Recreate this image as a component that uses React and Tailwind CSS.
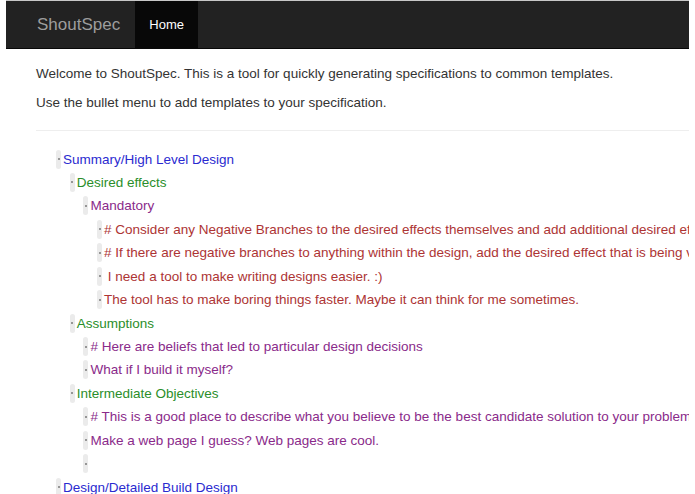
import React from "react";

const rows = [
  [0, "Summary/High Level Design"],
  [1, "Desired effects"],
  [2, "Mandatory"],
  [3, "# Consider any Negative Branches to the desired effects themselves and add additional desired effects to counter them."],
  [3, "# If there are negative branches to anything within the design, add the desired effect that is being violated."],
  [3, "\u00a0I need a tool to make writing designs easier. :)"],
  [3, "The tool has to make boring things faster. Maybe it can think for me sometimes."],
  [1, "Assumptions"],
  [2, "# Here are beliefs that led to particular design decisions"],
  [2, "What if I build it myself?"],
  [1, "Intermediate Objectives"],
  [2, "# This is a good place to describe what you believe to be the best candidate solution to your problem."],
  [2, "Make a web page I guess? Web pages are cool."],
  [2, ""],
  [0, "Design/Detailed Build Design"],
];

const indent = ["ml-0", "ml-[13.7px]", "ml-[27.4px]", "ml-[41.1px]"];
const colors = ["text-[#2a2ad0]", "text-[#2a8e2a]", "text-[#8a2a8a]", "text-[#ad3434]"];

function Bullet() {
  return (
    <span className="flex h-[19px] w-[5px] shrink-0 items-center justify-center rounded-[3px] bg-[#ebebeb]">
      <span className="h-[2px] w-[2px] rounded-full bg-[#7a7a7a]" />
    </span>
  );
}

export default function App() {
  return (
    <div className="w-[695px] h-[494px] overflow-hidden bg-white font-['Liberation_Sans',Arial,sans-serif]">
      <div className="ml-[6px] w-[683px] overflow-hidden">
        <nav className="flex h-[49px] border-t border-t-[#c8c8c8] border-b border-b-[#080808] bg-[#222222]">
          <div className="flex items-center pl-[31px] pr-[15px] text-[17px] text-[#9d9d9d]">ShoutSpec</div>
          <div className="flex w-[63px] items-center justify-center bg-[#080808] text-[13px] text-white">Home</div>
        </nav>
        <div className="pl-[30px]">
          <p className="mt-[15px] text-[13.5px] leading-[19px] text-[#333]">
            Welcome to ShoutSpec. This is a tool for quickly generating specifications to common templates.
          </p>
          <p className="mt-[10px] text-[13.5px] leading-[19px] text-[#333]">
            Use the bullet menu to add templates to your specification.
          </p>
          <div className="mt-[18px] border-t border-[#eeeeee]" />
          <div className="mt-[18.5px] pl-[20px]">
            {rows.map(([lvl, text], i) => (
              <div key={i} className={`flex h-[23.45px] items-start whitespace-nowrap ${indent[lvl]}`}>
                <Bullet />
                <span className={`ml-[2px] text-[13.5px] leading-[19px] ${colors[lvl]}`}>{text}</span>
              </div>
            ))}
          </div>
        </div>
      </div>
    </div>
  );
}
